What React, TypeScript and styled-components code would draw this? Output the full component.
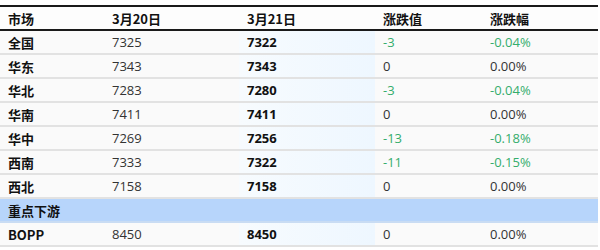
import React from "react";
import styled, { createGlobalStyle } from "styled-components";

const Global = createGlobalStyle`
  html, body { margin: 0; padding: 0; background: #ffffff; }
  body { font-family: "Open Sans", "Noto Sans CJK SC", sans-serif; }
`;

const Wrap = styled.div`
  padding-top: 5px;
  width: 598px;
`;

const Table = styled.table`
  width: 598px;
  border-collapse: collapse;
  table-layout: fixed;
  border-top: 2px solid #1a1a1a;
  border-bottom: 2px solid #1a1a1a;
  font-size: 13px;
  color: #222;
`;

const HeadCell = styled.th`
  height: 22px;
  padding: 0 0 0 8px;
  text-align: left;
  font-weight: bold;
  font-family: "Noto Sans CJK SC", "Open Sans", sans-serif;
  font-size: 13px;
  color: #111;
  background: #fdfdfd;
  border-bottom: 2px solid #1a1a1a;
`;

const Row = styled.tr<{ $group?: boolean }>`
  height: 22px;
  background: ${(p) => (p.$group ? "#b7d5fb" : "#fafafa")};
  & > td { border-bottom: 2px solid ${(p) => (p.$group ? "#c9dcf3" : "#e2e2e2")}; }
`;

const Cell = styled.td<{ $bold?: boolean; $green?: boolean; $hl?: boolean; $cjk?: boolean }>`
  height: 22px;
  padding: 0 0 0 8px;
  white-space: nowrap;
  font-weight: ${(p) => (p.$bold ? "bold" : "normal")};
  font-family: ${(p) =>
    p.$cjk ? `"Noto Sans CJK SC", "Open Sans", sans-serif` : `"Open Sans", "Noto Sans CJK SC", sans-serif`};
  color: ${(p) => (p.$green ? "#34ad6c" : p.$bold ? "#111" : "#333")};
  ${(p) => (p.$hl ? "background: linear-gradient(to right, #f7fbfe, #eef7ff);" : "")}
`;

type R = { name: string; a: string; b: string; c: string; d: string };

const rows: R[] = [
  { name: "全国", a: "7325", b: "7322", c: "-3", d: "-0.04%" },
  { name: "华东", a: "7343", b: "7343", c: "0", d: "0.00%" },
  { name: "华北", a: "7283", b: "7280", c: "-3", d: "-0.04%" },
  { name: "华南", a: "7411", b: "7411", c: "0", d: "0.00%" },
  { name: "华中", a: "7269", b: "7256", c: "-13", d: "-0.18%" },
  { name: "西南", a: "7333", b: "7322", c: "-11", d: "-0.15%" },
  { name: "西北", a: "7158", b: "7158", c: "0", d: "0.00%" },
];

const DataRow = ({ r }: { r: R }) => {
  const neg = r.c.startsWith("-");
  return (
    <Row>
      <Cell $bold $cjk>{r.name}</Cell>
      <Cell>{r.a}</Cell>
      <Cell $bold $hl>{r.b}</Cell>
      <Cell $green={neg}>{r.c}</Cell>
      <Cell $green={neg}>{r.d}</Cell>
    </Row>
  );
};

export default function App() {
  return (
    <>
      <Global />
      <Wrap>
        <Table>
          <colgroup>
            <col style={{ width: 104 }} />
            <col style={{ width: 135 }} />
            <col style={{ width: 136 }} />
            <col style={{ width: 107 }} />
            <col style={{ width: 116 }} />
          </colgroup>
          <thead>
            <tr>
              <HeadCell>市场</HeadCell>
              <HeadCell>3月20日</HeadCell>
              <HeadCell>3月21日</HeadCell>
              <HeadCell>涨跌值</HeadCell>
              <HeadCell>涨跌幅</HeadCell>
            </tr>
          </thead>
          <tbody>
            {rows.map((r) => (
              <DataRow key={r.name} r={r} />
            ))}
            <Row $group>
              <Cell $bold $cjk colSpan={5}>重点下游</Cell>
            </Row>
            <DataRow r={{ name: "BOPP", a: "8450", b: "8450", c: "0", d: "0.00%" }} />
          </tbody>
        </Table>
      </Wrap>
    </>
  );
}
